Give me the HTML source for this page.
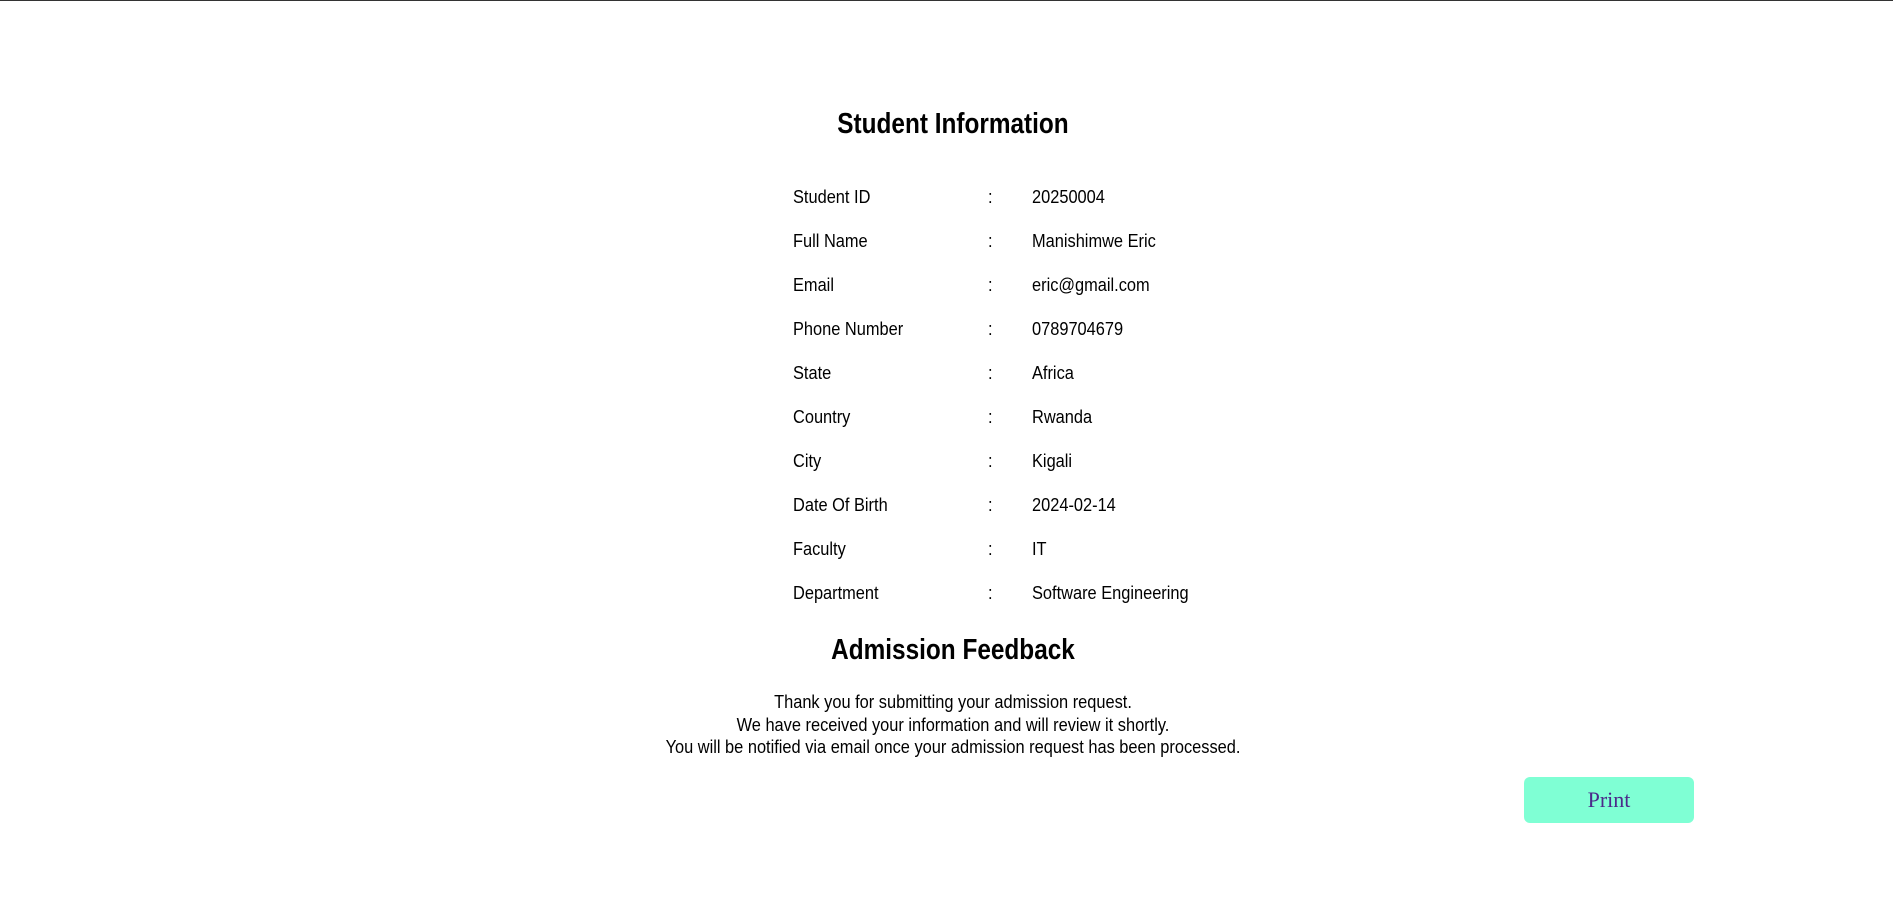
<!DOCTYPE html>
<html><head><meta charset="utf-8"><style>
html,body{margin:0;padding:0;width:1893px;height:917px;background:#fff;overflow:hidden}
body{border-top:1px solid #333;box-sizing:border-box;position:relative;font-family:"Liberation Sans",Arial,sans-serif;color:#000}
.c{position:absolute;left:0;width:1906px;text-align:center;white-space:nowrap;transform-origin:953px 0}
h2{margin:0;font-weight:bold;font-size:29px;line-height:34px;transform:scaleX(0.84)}
.row{position:absolute;font-size:18px;line-height:22px;white-space:nowrap;transform:scaleX(0.91);transform-origin:0 0}
.p{font-size:18px;line-height:22.5px;transform:scaleX(0.91)}
.btn{position:absolute;left:1524px;top:776px;width:170px;height:46px;background:#7fffd4;border-radius:6px;text-align:center;line-height:46px;font-family:"Liberation Serif",serif;font-size:22px;color:#4b2a8a}
</style></head><body>
<h2 class="c" style="top:106px">Student Information</h2>
<div class="row" style="left:793px;top:185px">Student ID</div><div class="row" style="left:988px;top:185px">:</div><div class="row" style="left:1032px;top:185px">20250004</div>
<div class="row" style="left:793px;top:229px">Full Name</div><div class="row" style="left:988px;top:229px">:</div><div class="row" style="left:1032px;top:229px">Manishimwe Eric</div>
<div class="row" style="left:793px;top:273px">Email</div><div class="row" style="left:988px;top:273px">:</div><div class="row" style="left:1032px;top:273px">eric@gmail.com</div>
<div class="row" style="left:793px;top:317px">Phone Number</div><div class="row" style="left:988px;top:317px">:</div><div class="row" style="left:1032px;top:317px">0789704679</div>
<div class="row" style="left:793px;top:361px">State</div><div class="row" style="left:988px;top:361px">:</div><div class="row" style="left:1032px;top:361px">Africa</div>
<div class="row" style="left:793px;top:405px">Country</div><div class="row" style="left:988px;top:405px">:</div><div class="row" style="left:1032px;top:405px">Rwanda</div>
<div class="row" style="left:793px;top:449px">City</div><div class="row" style="left:988px;top:449px">:</div><div class="row" style="left:1032px;top:449px">Kigali</div>
<div class="row" style="left:793px;top:493px">Date Of Birth</div><div class="row" style="left:988px;top:493px">:</div><div class="row" style="left:1032px;top:493px">2024-02-14</div>
<div class="row" style="left:793px;top:537px">Faculty</div><div class="row" style="left:988px;top:537px">:</div><div class="row" style="left:1032px;top:537px">IT</div>
<div class="row" style="left:793px;top:581px">Department</div><div class="row" style="left:988px;top:581px">:</div><div class="row" style="left:1032px;top:581px">Software Engineering</div>
<h2 class="c" style="top:632px">Admission Feedback</h2>
<div class="c p" style="top:690px">Thank you for submitting your admission request.<br>We have received your information and will review it shortly.<br>You will be notified via email once your admission request has been processed.</div>
<div class="btn">Print</div>
</body></html>
